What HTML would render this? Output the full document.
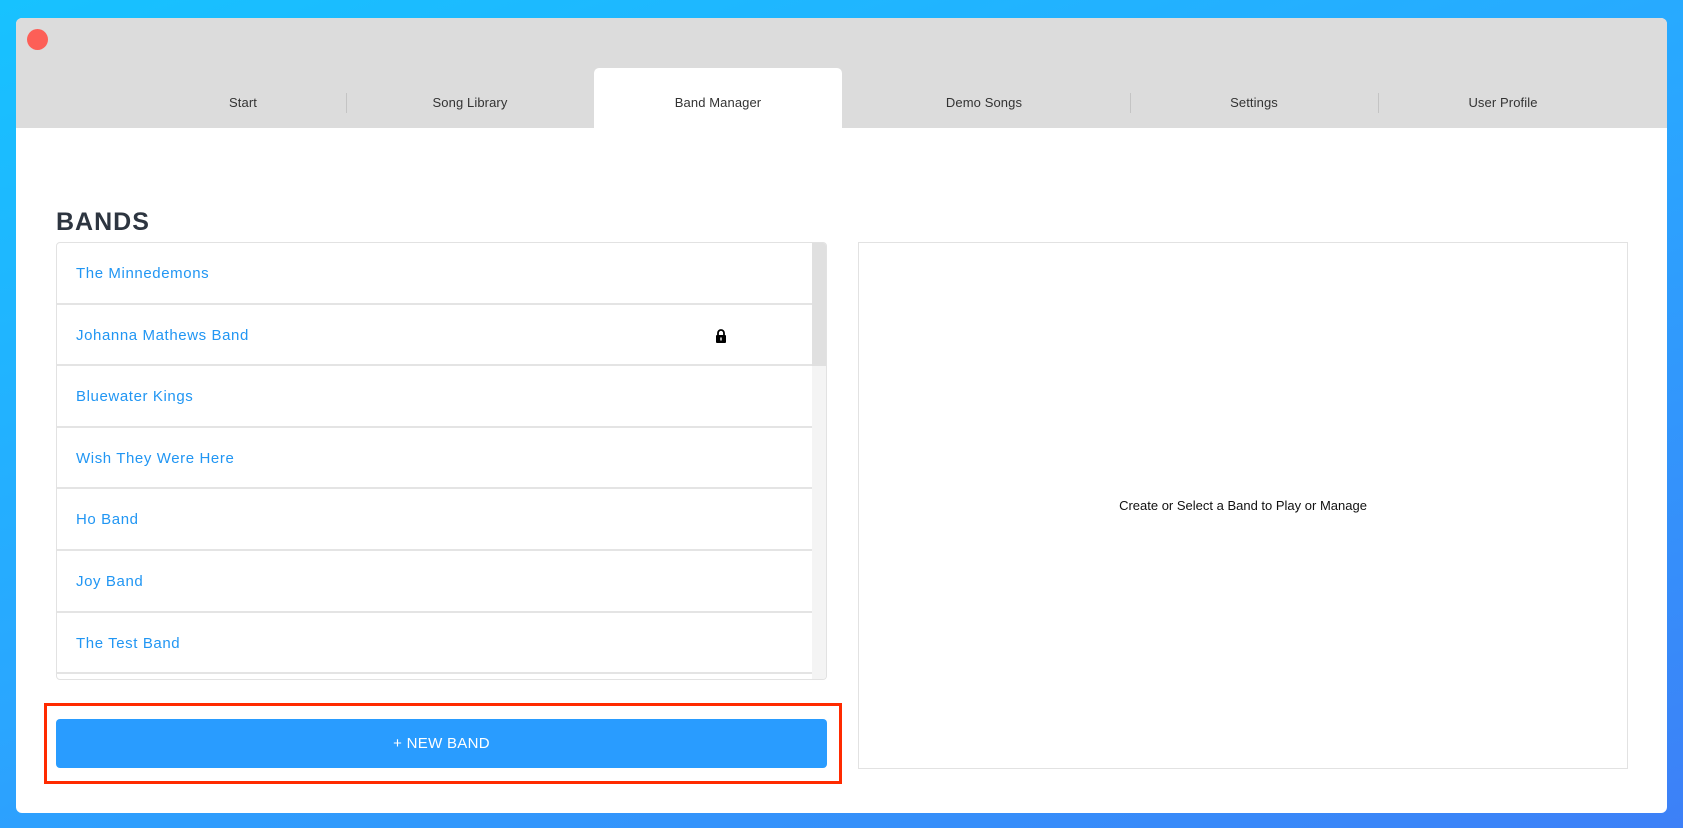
<!DOCTYPE html>
<html><head><style>
*{margin:0;padding:0;box-sizing:border-box}
body{width:1683px;height:828px;overflow:hidden;background:linear-gradient(160deg,#17c2ff 0%,#2aa6ff 50%,#3d80f7 100%);font-family:"Liberation Sans",sans-serif;position:relative}
.win{position:absolute;left:16px;top:18px;width:1651px;height:795px;background:#fff;border-radius:6px;overflow:hidden}
.hdr{position:absolute;left:0;top:0;width:100%;height:110px;background:#dcdcdc}
.close{position:absolute;left:11px;top:11px;width:21px;height:21px;border-radius:50%;background:#fd5f57}
.tab{position:absolute;top:77px;font-size:13px;color:#333;transform:translateX(-50%);white-space:nowrap;letter-spacing:.1px}
.div{position:absolute;top:75px;width:1px;height:20px;background:#c4c4c4}
.active{position:absolute;left:578px;top:50px;width:248px;height:62px;background:#fff;border-radius:5px 5px 0 0}
h1{position:absolute;left:40px;top:190px;font-size:25px;font-weight:bold;color:#2d3540;letter-spacing:1px}
.list{position:absolute;left:40px;top:224px;width:771px;height:438px;border:1px solid #e2e2e2;border-radius:4px;overflow:hidden}
.row{position:absolute;left:0;width:757px;height:61.6px;border-bottom:2px solid #e4e4e4;font-size:15px;color:#2196f3;padding-left:19px;line-height:62px;letter-spacing:.6px}
.sb{position:absolute;right:0;top:0;width:14px;height:100%;background:#f4f4f4}
.thumb{position:absolute;right:0;top:0;width:14px;height:123px;background:#e0e0e0}
.panel{position:absolute;left:842px;top:224px;width:770px;height:527px;border:1px solid #e2e2e2}
.panel span{position:absolute;left:0;width:100%;top:255px;text-align:center;font-size:13px;color:#111}
.red{position:absolute;left:28px;top:685px;width:798px;height:81px;border:3px solid #ff2a00}
.btn{position:absolute;left:40px;top:701px;width:771px;height:49px;background:#299cff;border-radius:4px;color:#fff;font-size:15px;text-align:center;line-height:50px;letter-spacing:.3px}
</style></head><body>
<div class="win">
<div class="hdr">
<div class="close"></div>
<div class="active"></div>
<div class="tab" style="left:227px">Start</div>
<div class="div" style="left:330px"></div>
<div class="tab" style="left:454px">Song Library</div>
<div class="tab" style="left:702px">Band Manager</div>
<div class="tab" style="left:968px">Demo Songs</div>
<div class="div" style="left:1114px"></div>
<div class="tab" style="left:1238px">Settings</div>
<div class="div" style="left:1362px"></div>
<div class="tab" style="left:1487px">User Profile</div>
</div>
<h1>BANDS</h1>
<div class="list">
<div class="row" style="top:0">The Minnedemons</div>
<div class="row" style="top:61.6px">Johanna Mathews Band<svg style="position:absolute;left:658px;top:24px" width="12" height="14" viewBox="0 0 12 14"><path d="M3 6V4a3 3 0 0 1 6 0v2" fill="none" stroke="#000" stroke-width="1.8"/><rect x="1" y="6" width="10" height="8" rx="1" fill="#000"/><rect x="5.3" y="8.5" width="1.4" height="3" fill="#fff"/></svg></div>
<div class="row" style="top:123.2px">Bluewater Kings</div>
<div class="row" style="top:184.8px">Wish They Were Here</div>
<div class="row" style="top:246.4px">Ho Band</div>
<div class="row" style="top:308px">Joy Band</div>
<div class="row" style="top:369.6px">The Test Band</div>
<div class="sb"><div class="thumb"></div></div>
</div>
<div class="panel"><span>Create or Select a Band to Play or Manage</span></div>
<div class="red"></div>
<div class="btn">+ NEW BAND</div>
</div>
</body></html>
